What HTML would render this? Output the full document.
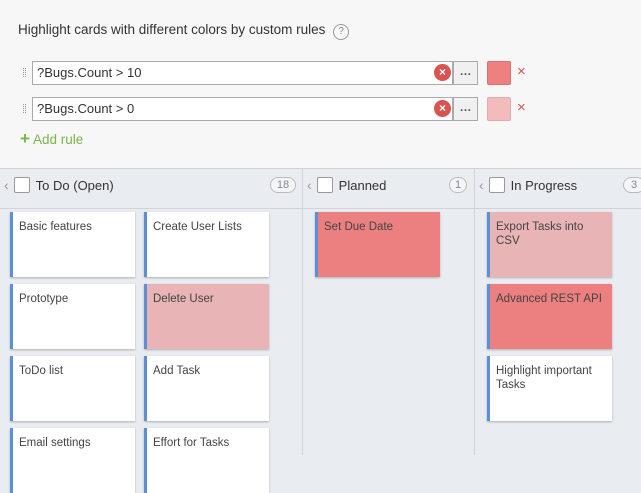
<!DOCTYPE html><html><head><style>
body{margin:0;width:641px;height:455px;overflow:hidden;font-family:"Liberation Sans",sans-serif;font-size:12px;color:#333;background:#e9ecf0;position:relative}
.top{position:absolute;left:0;top:0;width:641px;height:168px;background:#f7f7f7;border-bottom:1px solid #d0d4d9}
.a{position:absolute}
.inp{position:absolute;left:32px;width:419px;height:22px;border:1px solid #aaa;background:#fff;font-size:13px;line-height:22px;padding-left:4px;box-sizing:border-box;width:421px;height:24px}
.clr{position:absolute;right:1px;top:2px;width:17px;height:17px;border-radius:50%;background:#d9534f;color:#fff;font-size:12px;line-height:17px;text-align:center;font-weight:bold}
.dots{position:absolute;left:453px;width:25px;height:24px;border:1px solid #aaa;background:#f0f0f0;box-sizing:border-box;text-align:center;line-height:18px;font-weight:bold;font-size:12px;color:#555}
.sw{position:absolute;left:487px;width:24px;height:24px;border-radius:2px;box-sizing:border-box}
.x{position:absolute;left:517px;color:#d9534f;font-size:15px}
.grip{position:absolute;left:23px;width:3px;height:9px;border-left:1px dotted #999;border-right:1px dotted #999;box-sizing:border-box}
.hdr{position:absolute;top:169px;height:39px;border-bottom:1px solid #d0d4d9;font-size:13px;line-height:32px}
.sep{position:absolute;top:169px;height:286px;width:1px;background:#d0d4d9}
.cb{display:inline-block;width:14px;height:14px;border:1px solid #999;background:#fff;vertical-align:-3px;margin:0 6px 0 5px;border-radius:2px}
.cnt{position:absolute;top:8px;height:14px;border:1px solid #bbb;border-radius:8px;font-size:11px;line-height:14px;color:#888;text-align:center;background:#f4f5f7}
.card{position:absolute;width:125px;height:65px;background:#fff;border-left:3px solid #5b8fd6;box-sizing:border-box;padding:8px 6px;font-size:11.5px;line-height:14px;box-shadow:0 1px 2px rgba(0,0,0,.25);color:#444}
.r{background:#ec7f7f}.p{background:#e8b4b5}
.ch{color:#999;font-size:14px;margin-left:4px}
</style></head><body>
<div class="top">
<div class="a" style="left:18px;top:22px;font-size:13.5px;color:#333">Highlight cards with different colors by custom rules <span style="display:inline-block;width:14px;height:14px;border:1px solid #999;border-radius:50%;font-size:10px;text-align:center;line-height:14px;color:#888;margin-left:4px">?</span></div>
<div class="grip" style="top:68px"></div>
<div class="inp" style="top:61px">?Bugs.Count &gt; 10<span class="clr">×</span></div>
<div class="dots" style="top:61px">…</div>
<div class="sw" style="top:61px;background:#ee8080;border:1px solid #e07070"></div>
<div class="x" style="top:63px">×</div>
<div class="grip" style="top:104px"></div>
<div class="inp" style="top:97px">?Bugs.Count &gt; 0<span class="clr">×</span></div>
<div class="dots" style="top:97px">…</div>
<div class="sw" style="top:97px;background:#f3bcbc;border:1px solid #e8aaaa"></div>
<div class="x" style="top:99px">×</div>
<div class="a" style="left:20px;top:129px;color:#7ab648;font-size:13.5px"><span style="font-size:17px;font-weight:bold">+</span> Add rule</div>
</div>
<div class="hdr" style="left:0;width:302px"><span class="ch">‹</span><span class="cb"></span>To Do (Open)<span class="cnt" style="left:270px;width:24px">18</span></div>
<div class="hdr" style="left:303px;width:171px"><span class="ch">‹</span><span class="cb"></span>Planned<span class="cnt" style="left:146px;width:16px">1</span></div>
<div class="hdr" style="left:475px;width:166px"><span class="ch">‹</span><span class="cb"></span>In Progress<span class="cnt" style="left:148px;width:20px">3</span></div>
<div class="sep" style="left:302px"></div><div class="sep" style="left:474px"></div>
<div class="card" style="left:10px;top:212px">Basic features</div>
<div class="card" style="left:144px;top:212px">Create User Lists</div>
<div class="card" style="left:10px;top:284px">Prototype</div>
<div class="card p" style="left:144px;top:284px">Delete User</div>
<div class="card" style="left:10px;top:356px">ToDo list</div>
<div class="card" style="left:144px;top:356px">Add Task</div>
<div class="card" style="left:10px;top:428px">Email settings</div>
<div class="card" style="left:144px;top:428px">Effort for Tasks</div>
<div class="card r" style="left:315px;top:212px">Set Due Date</div>
<div class="card p" style="left:487px;top:212px">Export Tasks into CSV</div>
<div class="card r" style="left:487px;top:284px">Advanced REST API</div>
<div class="card" style="left:487px;top:356px">Highlight important Tasks</div>
</body></html>
